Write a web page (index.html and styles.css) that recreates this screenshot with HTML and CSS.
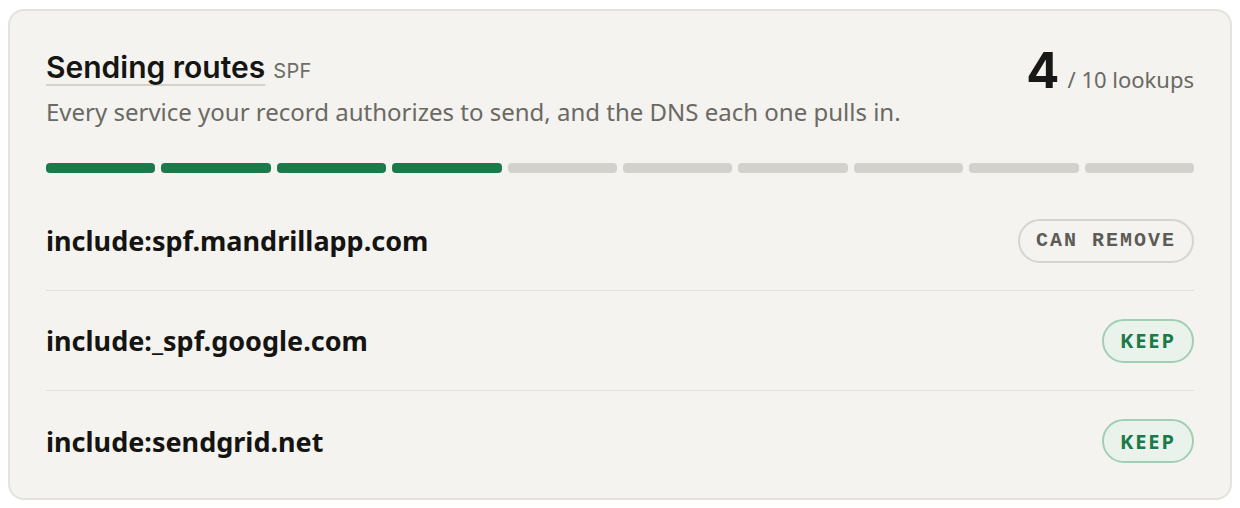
FILE: index.html
```html
<!DOCTYPE html>
<html>
<head>
<meta charset="utf-8">
<link rel="stylesheet" href="styles.css">
</head>
<body>
<section class="card">
  <header class="head">
    <div class="titles">
      <h2 class="title"><span class="title-text">Sending routes</span> <span class="tag">SPF</span></h2>
      <p class="desc">Every service your record authorizes to send, and the DNS each one pulls in.</p>
    </div>
    <div class="count"><span class="num">4</span><span class="of">/ 10 lookups</span></div>
  </header>
  <div class="meter">
    <span class="seg on"></span><span class="seg on"></span><span class="seg on"></span><span class="seg on"></span>
    <span class="seg"></span><span class="seg"></span><span class="seg"></span><span class="seg"></span><span class="seg"></span><span class="seg"></span>
  </div>
  <ul class="rows">
    <li class="row"><span class="domain">include:spf.mandrillapp.com</span><span class="badge remove">CAN REMOVE</span></li>
    <li class="row"><span class="domain">include:_spf.google.com</span><span class="badge keep">KEEP</span></li>
    <li class="row"><span class="domain">include:sendgrid.net</span><span class="badge keep">KEEP</span></li>
  </ul>
</section>
</body>
</html>
```

FILE: styles.css
```css
* { box-sizing: border-box; }
html, body { background: #ffffff; }
body {
  margin: 9px 8px 8px;
  font-family: "Noto Sans", "Open Sans", sans-serif;
  color: #161614;
}
.card {
  background: #f4f3ef;
  border: 2px solid #e4e2dc;
  border-radius: 16px;
  padding: 36px 36px 0;
  height: 491px;
}
.head {
  display: flex;
  justify-content: space-between;
  align-items: flex-start;
}
.title {
  margin: 0;
  font-weight: 400;
  line-height: 40px;
  height: 40px;
  display: flex;
  align-items: baseline;
  gap: 8px;
}
.title-text {
  font-family: "Inter", sans-serif;
  font-size: 30px;
  font-weight: 600;
  color: #151513;
  text-decoration: underline;
  text-decoration-color: #d4d2cb;
  text-decoration-thickness: 2px;
  text-underline-offset: 6px;
}
.tag {
  font-family: "Inter", sans-serif;
  font-size: 20px;
  color: #6d6c67;
  letter-spacing: 0.3px;
}
.desc {
  margin: 9px 0 0;
  font-size: 24px;
  line-height: 32px;
  color: #6a6964;
}
.count {
  display: flex;
  align-items: baseline;
  gap: 8px;
  margin-top: -1px;
}
.num {
  font-family: "Inter", sans-serif;
  font-size: 49px;
  font-weight: 700;
  line-height: 50px;
  color: #181816;
}
.of {
  font-size: 22px;
  color: #6a6964;
}
.meter {
  display: flex;
  gap: 6px;
  margin-top: 35px;
}
.seg {
  flex: 1;
  height: 10px;
  border-radius: 4px;
  background: #d3d1cb;
}
.seg.on { background: #1b7a4a; }
.rows {
  list-style: none;
  margin: 0;
  padding: 0;
}
.row {
  display: flex;
  justify-content: space-between;
  align-items: center;
  height: 100px;
  border-bottom: 1px solid #e2e0da;
}
.row:first-child { height: 118px; padding-top: 18px; }
.row:last-child { border-bottom: 0; }
.domain {
  font-size: 27px;
  font-weight: 700;
  color: #141412;
}
.badge {
  display: inline-flex;
  align-items: center;
  height: 44px;
  border-radius: 22px;
  border: 2px solid;
  padding: 0 16px;
  font-weight: 700;
}
.remove {
  font-family: "Liberation Mono", monospace;
  font-size: 20px;
  letter-spacing: 2px;
  color: #5c5b57;
  border-color: #d6d4ce;
}
.keep {
  font-size: 20px;
  letter-spacing: 2px;
  color: #1b7a4a;
  background: #e9f3ec;
  border-color: #a0cfb3;
}
```
